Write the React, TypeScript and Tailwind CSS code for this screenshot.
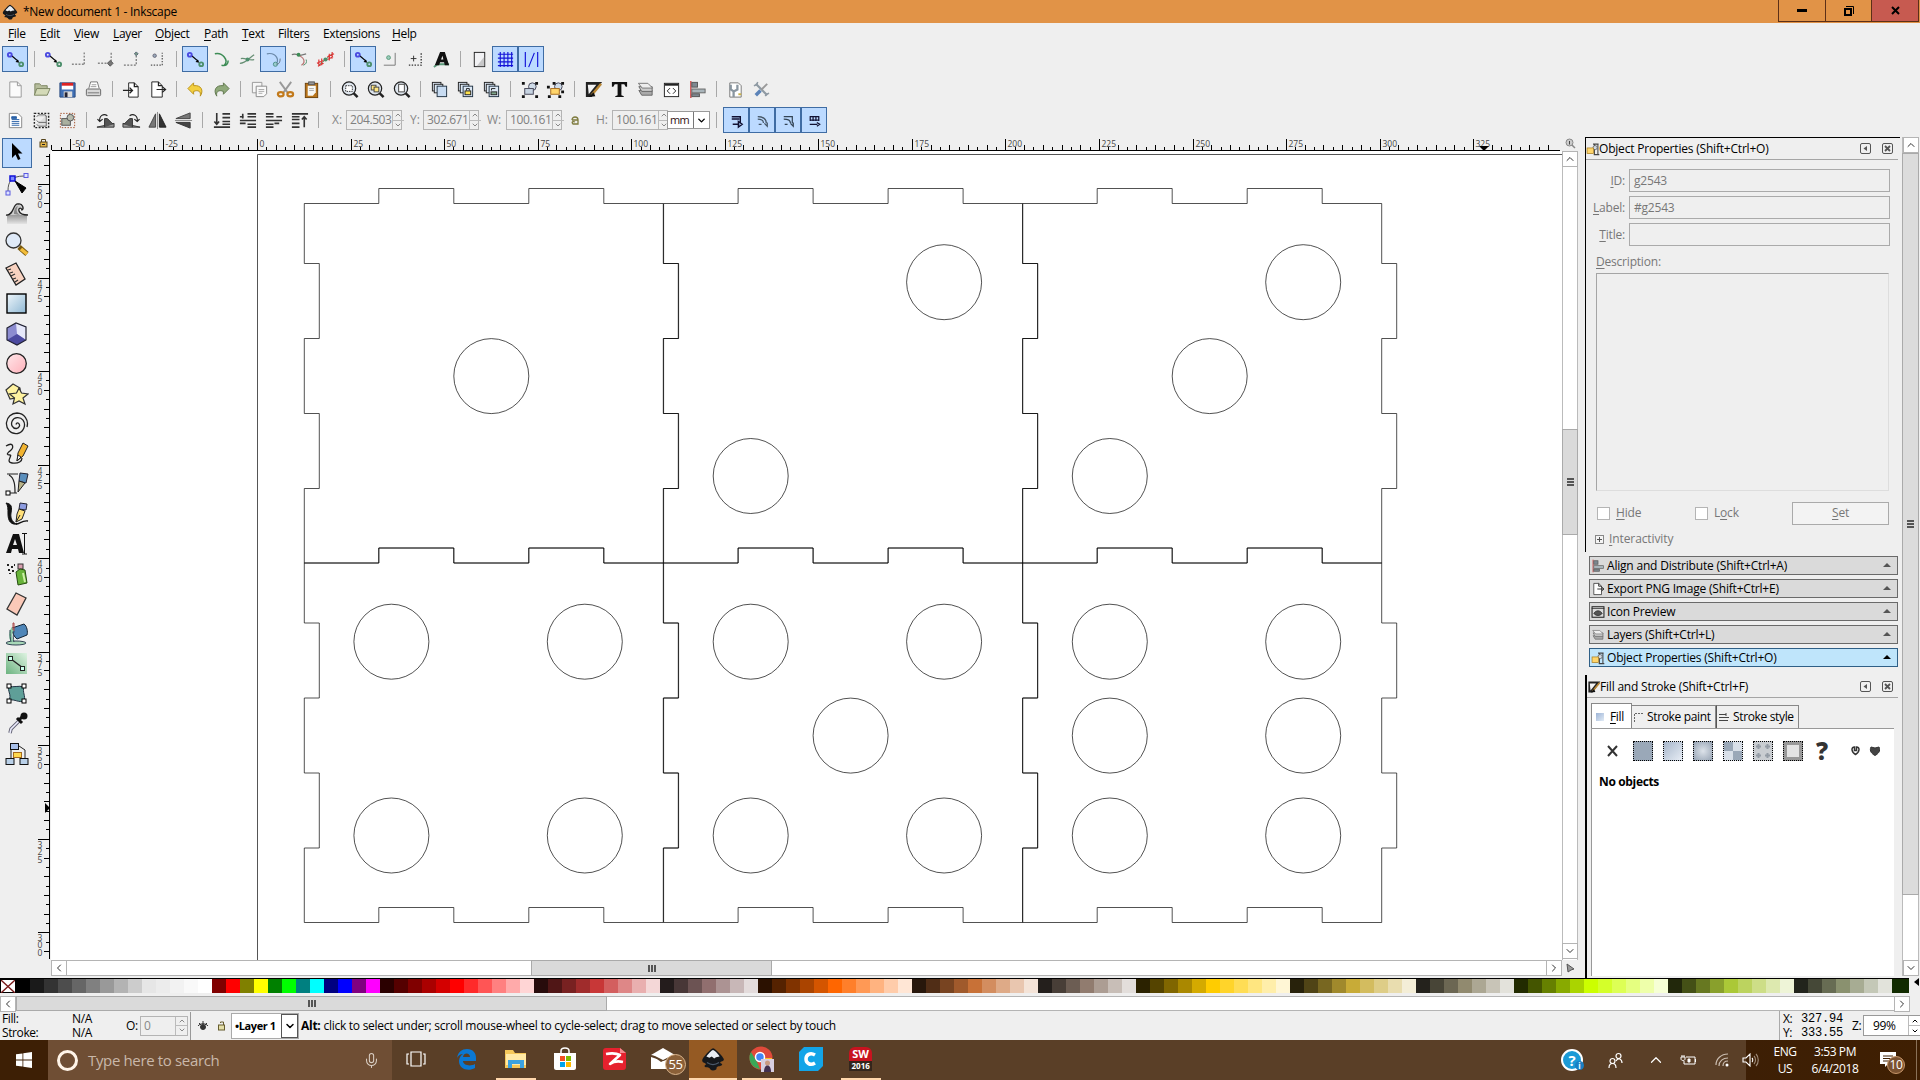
import { ReactNode } from "react";
import clsx from "clsx";
import { ChevronDown, ChevronLeft, ChevronRight, ChevronUp, Mic } from "lucide-react";

const UI = "font-['Open_Sans','Noto_Sans',sans-serif]";

function Svg({ children, size = 20 }: { children: ReactNode; size?: number }) {
  return (
    <svg width={size} height={size} viewBox="0 0 20 20" fill="none" stroke="#222" className="shrink-0">
      {children}
    </svg>
  );
}

const snap = (
  <>
    <path d="M6 6l7 6" stroke="#000" strokeWidth="1.3" />
    <path d="M14 13.500l-4-.8 2.500-2.700z" fill="#000" stroke="none" />
    <circle cx="4" cy="5" r="2" stroke="#4a4ae0" strokeWidth="2" />
    <circle cx="16" cy="15" r="2" stroke="#4d8f6c" strokeWidth="2" />
  </>
);
const zoomBase = (
  <>
    <circle cx="9.500" cy="9" r="7" fill="#dfe6ee" strokeWidth="1.300" />
    <path d="M14.500 14l4 4" strokeWidth="2.600" />
  </>
);
const dupBase = (
  <>
    <rect x="2.500" y="2.500" width="9" height="9" fill="#dce8f5" />
    <rect x="4.500" y="4.500" width="9" height="9" fill="#dce8f5" />
  </>
);
const align = (
  <>
    <path d="M3 1v18" stroke="#c33" strokeWidth="1.300" />
    <rect x="4" y="2.500" width="6" height="5" fill="#7d8890" stroke="#555" />
    <rect x="4" y="9.500" width="14" height="4" fill="#a9b5bb" stroke="#666" />
    <rect x="4" y="14.500" width="8" height="3" fill="#7d8890" stroke="#555" />
  </>
);
const layers = (
  <>
    <path d="M3 11l3 5h11v-5z" fill="#aaa" stroke="#666" />
    <path d="M3 7l3 5h11V7z" fill="#ccc" stroke="#666" />
    <path d="M2.500 3.500h10l5 5h-11z" fill="#eee" stroke="#777" />
  </>
);
const fillStroke = (
  <>
    <path d="M2 2h17L8 18H2z" fill="#222" stroke="none" />
    <path d="M4 5h9L5 15z" fill="#f4f4f4" stroke="none" />
    <path d="M18 4L8 16" stroke="#b98734" strokeWidth="2.500" />
    <path d="M10 13l-5 5 7-1z" fill="#111" stroke="none" />
  </>
);
const objProps = (
  <>
    <path d="M10 3h8M11 18h8M12 3v15M17 3v15" stroke="#444" strokeWidth="1.500" />
    <circle cx="13" cy="8" r="3" fill="#cfd8e2" stroke="#555" />
    <rect x="1.500" y="8.500" width="9" height="8" fill="#ffd56b" stroke="#a67a1c" />
  </>
);
const exportIcon = (
  <>
    <path d="M4 2h7l4 4v12H4z" fill="#fff" />
    <path d="M11 2v4h4M9 10h9M15 7l3.500 3-3.500 3" strokeWidth="1.300" />
  </>
);

const I: Record<string, ReactNode> = {
  snap,
  bbox: <path d="M2 15h13M15 15V2" stroke="#888" strokeWidth="1.500" strokeDasharray="2 1.500" />,
  bboxEdge: (
    <>
      <path d="M2 14h13M16 12V2" stroke="#888" strokeWidth="1.500" strokeDasharray="2 1.500" />
      <path d="M15 11l3 3-3 3-3-3z" fill="#777" stroke="#555" />
    </>
  ),
  bboxMid: (
    <>
      <path d="M2 16h13V6" stroke="#777" strokeDasharray="2 1.500" strokeWidth="1.300" />
      <path d="M15 2l2 2-2 2-2-2z" fill="#7a9a86" stroke="#567" />
    </>
  ),
  bboxCtr: (
    <>
      <path d="M3 16h12V3" stroke="#555" strokeDasharray="1.500 1.500" strokeWidth="1.300" />
      <circle cx="7" cy="6" r="1.800" stroke="#667" fill="#9ab" />
    </>
  ),
  curve: <path d="M3 4c8-2 15 7 10 12M17 11c0 4-2 6-7 5" stroke="#3c8c55" strokeWidth="1.600" />,
  cross: (
    <>
      <path d="M2 14c6 0 9-5 15-9M3 9c5-1 10 3 14 1" stroke="#678f74" strokeWidth="1.300" />
      <circle cx="10" cy="10" r="2" fill="#4d8f6c" stroke="none" />
    </>
  ),
  cusp: (
    <>
      <path d="M3 4c10-2 15 8 8 12" stroke="#6a88a8" strokeWidth="1.300" />
      <circle cx="12" cy="15" r="2.200" stroke="#4d8f8c" fill="#9cc" />
      <path d="M17 9c0 4-1 6-4 6" stroke="#678" />
    </>
  ),
  smooth: (
    <>
      <path d="M2 5c3-2 6 0 8 1l7-2" stroke="#777" strokeWidth="1.300" />
      <path d="M10 6c6 3 6 8 2 10" stroke="#b77" strokeWidth="1.300" />
      <circle cx="9" cy="5" r="2" fill="#3c8c55" stroke="none" />
      <path d="M17 10c1 3 0 5-3 6" stroke="#4d8f6c" />
    </>
  ),
  line: (
    <>
      <path d="M3 16L17 4" stroke="#3c8c55" />
      <path d="M3 10v7M6 9v7M14 4v7M17 2v7M1 14l7-3M2 17l6-3M12 7l7-3M12 10l6-3" stroke="#d33" strokeWidth="1.200" />
      <circle cx="10" cy="10" r="2.200" fill="#4d8f6c" stroke="none" />
    </>
  ),
  objCtr: (
    <>
      <path d="M4 16h12V3" stroke="#777" />
      <circle cx="9" cy="8" r="2" stroke="#5a9a7a" fill="#9cb" />
    </>
  ),
  rotCtr: (
    <>
      <path d="M3 16h13V3" stroke="#333" strokeDasharray="1.500 1.500" strokeWidth="1.400" />
      <path d="M5 9h6M8 6v6" stroke="#333" />
    </>
  ),
  text: (
    <>
      <path d="M2 18l4-3h12" stroke="#5a9a7a" strokeWidth="2" />
      <path d="M3 16L8.500 2h5L18 16h-4.500l-.8-3H8.500l-1 3zM9.500 10h2.500l-1-4z" fill="#111" fillRule="evenodd" stroke="none" />
    </>
  ),
  page: (
    <>
      <rect x="4.500" y="2.500" width="11" height="15" fill="#f2f2f4" stroke="#222" />
      <path d="M15 17V7l-8 10z" fill="#aaa" stroke="none" opacity=".6" />
    </>
  ),
  grid: <path d="M4.500 2v16M8.500 2v16M12.500 2v16M16.500 2v16M2 4.500h16M2 8.500h16M2 12.500h16M2 16.500h16" stroke="#1212d8" strokeWidth="1.200" />,
  guide: <path d="M3.500 2v16M16.500 2v16M13 3L7 18" stroke="#1212d8" strokeWidth="1.200" />,
  newDoc: (
    <>
      <path d="M4 2h8l4 4v12H4z" fill="#fbfbfb" stroke="#999" />
      <path d="M12 2v4h4" stroke="#999" />
    </>
  ),
  open: (
    <>
      <path d="M3 16V4h5l2 2h6v3" fill="#b6bd9c" stroke="#7a8460" />
      <path d="M2.500 16L5 9h14l-3 7z" fill="#d4dab8" stroke="#7a8460" />
    </>
  ),
  save: (
    <>
      <path d="M2 3h16v15H2z" fill="#3f6fb5" stroke="#284a80" />
      <path d="M4 3h12v4H4z" fill="#d22" stroke="none" />
      <path d="M4 6h12v4H4z" fill="#fff" stroke="none" />
      <rect x="6" y="12" width="9" height="6" fill="#ddd" stroke="none" />
      <rect x="7" y="13" width="3" height="5" fill="#223" stroke="none" />
    </>
  ),
  print: (
    <>
      <path d="M5 9l2-7h7l2 7" fill="#fff" stroke="#777" />
      <path d="M8 5h5M7 7h6" stroke="#999" />
      <rect x="2.500" y="9.500" width="15" height="7" rx="1" fill="#d8d8d8" stroke="#666" />
      <path d="M4 13.500h12" stroke="#777" />
    </>
  ),
  imp: (
    <>
      <path d="M7 3h6l4 4v11H7z" fill="#fff" />
      <path d="M13 3v4h4M1 11h10M8 8l3 3-3 3" strokeWidth="1.400" />
    </>
  ),
  exp: exportIcon,
  undo: <path d="M8 3L2 9l6 6v-3c5-2 8 0 7 5 4-6 1-12-7-11z" fill="#f3cf3f" stroke="#b8901c" />,
  redo: <path d="M12 3l6 6-6 6v-3c-5-2-8 0-7 5-4-6-1-12 7-11z" fill="#8fa97a" stroke="#61784f" />,
  copy: (
    <>
      <path d="M2.500 2.500h10v11h-10z" fill="#f6f6f6" stroke="#999" />
      <path d="M6.500 6.500h11v8l-3 3h-8z" fill="#f9f9f9" stroke="#888" />
      <path d="M9 10h6M9 12h6M9 14h4" stroke="#aaa" />
    </>
  ),
  cut: (
    <>
      <path d="M4 2l8 11M16 2L8 13" stroke="#999" strokeWidth="2" />
      <ellipse cx="5" cy="15" rx="3" ry="2.300" stroke="#c27a1c" strokeWidth="2.300" />
      <ellipse cx="15" cy="15" rx="3" ry="2.300" stroke="#c27a1c" strokeWidth="2.300" />
    </>
  ),
  paste: (
    <>
      <rect x="3.500" y="3.500" width="13" height="15" fill="#b8741a" stroke="#6d430c" />
      <path d="M6 6h8.500v7l-3 3.500H6z" fill="#f8f8f4" stroke="none" />
      <rect x="7" y="2" width="6" height="3" fill="#999" stroke="#555" />
      <path d="M7.500 9h5M7.500 11h5" stroke="#aaa" />
    </>
  ),
  zoomSel: (
    <>
      {zoomBase}
      <rect x="6" y="6" width="7" height="6" stroke="#333" strokeDasharray="1.500 1" fill="#fff" />
    </>
  ),
  zoomDraw: (
    <>
      {zoomBase}
      <rect x="5.500" y="5.500" width="5" height="5" fill="#ffe680" stroke="#444" />
      <rect x="8.500" y="7.500" width="5" height="5" fill="#ffe680" stroke="#444" />
    </>
  ),
  zoomPage: (
    <>
      {zoomBase}
      <rect x="7" y="4.500" width="6" height="8" fill="#fff" stroke="#444" />
    </>
  ),
  dup: (
    <>
      {dupBase}
      <rect x="7.500" y="6.500" width="10" height="11" fill="#c8dcf2" stroke="#234" />
    </>
  ),
  clone: (
    <>
      {dupBase}
      <rect x="7.500" y="6.500" width="10" height="11" fill="#dce8f5" stroke="#234" />
      <rect x="9.500" y="11.500" width="6" height="4" fill="#ffe34d" stroke="#222" />
      <path d="M11 11V9h3v2" />
    </>
  ),
  unlink: (
    <>
      {dupBase}
      <rect x="7.500" y="6.500" width="10" height="11" fill="#dce8f5" stroke="#234" />
      <rect x="9.500" y="12.500" width="6" height="3" fill="#7fa68a" stroke="#222" />
      <path d="M10 11V9h4" />
    </>
  ),
  group: (
    <>
      <circle cx="13" cy="7" r="4" fill="#cfdbe8" stroke="#445" />
      <rect x="5" y="9" width="9" height="6" fill="#c7d4e2" stroke="#445" />
      <path d="M2 2h3v3H2zM16 2h3v3h-3zM2 16h3v3H2zM16 16h3v3h-3z" fill="#111" stroke="none" />
    </>
  ),
  ungroup: (
    <>
      <circle cx="13" cy="7" r="4" fill="#cfdbe8" stroke="#445" />
      <rect x="5" y="9" width="9" height="6" fill="#ffd56b" stroke="#a66a1c" />
      <path d="M1 6h3v3H1zM7 2h3v3H7zM16 2h3v3h-3zM2 16h3v3H2zM16 11h3v3h-3zM13 16h3v3h-3z" fill="#111" stroke="none" />
    </>
  ),
  fillStroke,
  bigT: <path d="M2 2h16v5h-1.500L15 4.500h-3V16l2.500 1v1h-9v-1L8 16V4.500H5L3.500 7H2z" fill="#111" stroke="none" />,
  layers,
  xml: (
    <>
      <rect x="2.500" y="3.500" width="15" height="14" fill="#fff" stroke="#222" />
      <path d="M3 5h14" strokeWidth="2" />
      <path d="M8.500 8.500L5.500 11.500l3 3M11.500 8.500l3 3-3 3" />
    </>
  ),
  align,
  prefs: (
    <>
      <path d="M4 3h9l3 3v12H4z" fill="#fff" stroke="#777" />
      <path d="M5 5v5l3 2v6M12 5v5l-4 2" stroke="#8a96a0" strokeWidth="2.400" />
      <path d="M13 15h3" stroke="#c9b14a" strokeWidth="2" />
    </>
  ),
  tools: (
    <>
      <path d="M4 4l12 12" stroke="#8f9aa3" strokeWidth="2.400" />
      <path d="M16 4L10 10" stroke="#999" strokeWidth="2" />
      <path d="M9 11l-5 5" stroke="#5b83b8" strokeWidth="3.600" />
      <path d="M2 6l3-1 1-3M14 17l1-2 3-1" stroke="#8f9aa3" strokeWidth="1.600" />
    </>
  ),
  selAll: (
    <>
      <path d="M3.500 2.500h9l4 4v11h-13z" fill="#fff" stroke="#888" />
      <path d="M6 6h5v2H6zM6 9h8M6 11h8M6 13h8M6 15h8" fill="#2a62a8" stroke="#2a62a8" />
    </>
  ),
  selLayers: (
    <>
      <path d="M5 6l2-2h7l1 2M5 10l2 2h8M5 14l2 2h8V5" stroke="#666" fill="#ddd" />
      <rect x="2.500" y="2.500" width="15" height="15" strokeDasharray="2 1.500" strokeWidth="1.500" />
    </>
  ),
  desel: (
    <>
      <rect x="4" y="8" width="9" height="7" fill="#aab09f" stroke="#555" />
      <circle cx="13" cy="7" r="3.500" fill="#b8bcae" stroke="#555" />
      <rect x="2.500" y="2.500" width="15" height="15" stroke="#a3502a" strokeDasharray="1.500 1.500" />
    </>
  ),
  rotL: (
    <>
      <path d="M1 17h18V13z" fill="#999" stroke="#333" />
      <path d="M9 17V8h3l6 6" fill="#555" stroke="#333" />
      <path d="M4 11c-1-6 4-9 8-6M1.500 8.500L4 11l3-2.500" strokeWidth="1.200" />
    </>
  ),
  rotR: (
    <>
      <path d="M19 17H1v-4z" fill="#999" stroke="#333" />
      <path d="M2 14l6-6h3v9" fill="#555" stroke="#333" />
      <path d="M16 11c1-6-4-9-8-6M18.500 8.500L16 11l-3-2.500" strokeWidth="1.200" />
    </>
  ),
  flipH: (
    <>
      <path d="M8 3v14H1z" fill="#777" stroke="#444" />
      <path d="M12 3v14h7z" fill="#333" stroke="#222" />
      <path d="M10 1v18" stroke="#888" />
    </>
  ),
  flipV: (
    <>
      <path d="M17 8V2L2 8z" fill="#777" stroke="#444" />
      <path d="M17 12v6L2 12z" fill="#444" stroke="#333" />
      <path d="M1 10h18" stroke="#888" />
    </>
  ),
  lower2: <path d="M5 2v12M2.500 11L5 14l2.500-3M11 3h8M11 7h8M11 11h8M2 17h17M11 14h8" stroke="#333" strokeWidth="1.700" />,
  lower1: <path d="M10 3h9M10 6h9M2 10h17M10 14h9M10 17h9M2 6h4M5 3v5M8 13H2" stroke="#333" strokeWidth="1.700" />,
  raise1: <path d="M2 3h8M2 6h8M2 10h17M2 14h8M2 17h8M13 6h6M11 13h5" stroke="#333" strokeWidth="1.700" />,
  raise2: <path d="M2 3h17M2 6h8M2 9h8M2 13h8M2 17h8M15 17V7M12.500 9L15 6l2.500 3" stroke="#333" strokeWidth="1.700" />,
  aff1: <path d="M5 6h9v6M5 8.500h8M6 14h7M12 11l4 3-4 3z" stroke="#113" fill="none" strokeWidth="1.500" />,
  aff2: <path d="M5 6c6 0 9 3 9 7M5 8.500c4 0 6 2 6 4M6 14h3M12 13l3 3v-4" stroke="#456" strokeWidth="1.300" />,
  aff3: <path d="M5 6h9v7M5 8.500c4 0 7 1 7 4M6 14h3M12 13l3 3v-4" stroke="#345" strokeWidth="1.300" />,
  aff4: <path d="M5 6h10M5 9.500h10M5.500 5.500v5M8.500 5.500v5M11.500 5.500v5M14.500 5.500v5M5 14h8M12.500 12l3 2-3 2" stroke="#113" strokeWidth="1.300" />,
};

const ROW1 = "*snap | snap bbox bboxEdge bboxMid bboxCtr | *snap curve cross *cusp smooth line | *snap objCtr rotCtr text | page *grid *guide".split(" ");
const ROW2 =
  "newDoc open save print | imp exp | undo redo | copy cut paste | zoomSel zoomDraw zoomPage | dup clone unlink | group ungroup | fillStroke bigT layers xml align | prefs tools".split(" ");
const ROW3 = "selAll selLayers desel | rotL rotR flipH flipV | lower2 lower1 raise1 raise2 |".split(" ");
const AFFECT = "*aff1 *aff2 *aff3 *aff4".split(" ");

function Tools({ items }: { items: string[] }) {
  return (
    <div className="flex items-center">
      {items.map((item, i) =>
        item === "|" ? (
          <div key={i} className="w-3 h-4 flex justify-center">
            <div className="w-px bg-[#a8a8a8]" />
          </div>
        ) : (
          <div
            key={i}
            className={clsx("w-[26px] h-[26px] flex items-center justify-center", item[0] === "*" && "bg-[#bcdaff] border border-[#3f6ca3]")}
          >
            <Svg size={19}>{I[item.replace("*", "")]}</Svg>
          </div>
        )
      )}
    </div>
  );
}

function InkscapeLogo({ size }: { size: number }) {
  return (
    <svg width={size} height={size} viewBox="0 0 20 20" className="shrink-0">
      <path d="M10 1c1.500 0 8.500 7 9 9s-3 2-3 3 3 1 1 2.500c-1 .7-4 .5-4 2s-1 2-3 2-2-1-3-2-4 0-4-1.500 2-1 1-2-3-1-3-3S8.500 1 10 1z" fill="#15181c" />
      <path d="M10 2.500c1 0 5 4 5.500 5.500l-3 .5-1.500 1-2-1.500-2 1-2.500-1C5 7 9 2.500 10 2.500z" fill="#e8edf3" />
      <path d="M5 13c3 2 7 2 10 0" stroke="#4c5a6b" fill="none" />
    </svg>
  );
}

const menus = [
  { w: "w-[18px]", pre: "", key: "F", post: "ile" },
  { w: "w-[20px]", pre: "", key: "E", post: "dit" },
  { w: "w-[25px]", pre: "", key: "V", post: "iew" },
  { w: "w-[28px]", pre: "", key: "L", post: "ayer" },
  { w: "w-[35px]", pre: "", key: "O", post: "bject" },
  { w: "w-[24px]", pre: "", key: "P", post: "ath" },
  { w: "w-[22px]", pre: "", key: "T", post: "ext" },
  { w: "w-[31px]", pre: "Filter", key: "s", post: "" },
  { w: "w-[55px]", pre: "Exte", key: "n", post: "sions" },
  { w: "w-[25px]", pre: "", key: "H", post: "elp" },
];

function Header() {
  return (
    <>
      <div className="h-[23px] shrink-0 bg-[#e19347] flex items-center pl-[2px]">
        <InkscapeLogo size={16} />
        <span className="ml-[5px] text-[12px] tracking-[-0.28px]">*New document 1 - Inkscape</span>
        <div className="ml-auto mr-[1px] flex self-start h-[22px] border-b border-l border-[#5c2f17]">
          <div className="w-[47px] border-r border-[#5c2f17] flex items-center justify-center">
            <div className="w-[10px] h-[3px] bg-black" />
          </div>
          <div className="w-[46px] border-r border-[#5c2f17] flex items-center justify-center">
            <svg width="12" height="12" viewBox="0 0 12 12" fill="none" stroke="#000">
              <rect x="2" y="4" width="6" height="6" strokeWidth="2" />
              <path d="M3 1.500h7.500V9" />
            </svg>
          </div>
          <div className="w-[47px] border-r border-[#5c2f17] bg-[#c75a50] flex items-center justify-center">
            <svg width="9" height="9" viewBox="0 0 9 9" stroke="#000" strokeWidth="2">
              <path d="M1 1l7 7M8 1L1 8" />
            </svg>
          </div>
        </div>
      </div>
      <div className="h-[22px] shrink-0 flex items-center gap-[14px] pl-2 text-[12px] tracking-[-0.35px]">
        {menus.map((m) => (
          <span key={m.key + m.post} className={clsx("whitespace-nowrap", m.w)}>
            {m.pre}
            <u className="underline-offset-2">{m.key}</u>
            {m.post}
          </span>
        ))}
      </div>
    </>
  );
}

function Spin({ dark }: { dark?: boolean }) {
  return (
    <div className={clsx("w-[12px] shrink-0 flex flex-col border-l border-[#bbb]", dark ? "text-black" : "text-[#888]")}>
      <div className="flex-1 flex items-center justify-center border-b border-[#bbb]">
        <ChevronUp size={8} strokeWidth={3} />
      </div>
      <div className="flex-1 flex items-center justify-center">
        <ChevronDown size={8} strokeWidth={3} />
      </div>
    </div>
  );
}

function NumField({ label, value, lw }: { label: string; value: string; lw: string }) {
  return (
    <>
      <span className={clsx("text-[12px] text-[#888]", lw)}>{label}</span>
      <div className="w-[56px] h-5 border border-[#b4b4b4] flex text-[12px] text-[#808080]">
        <span className="flex-1 pl-[3px] leading-[18px] tracking-[-0.4px]">{value}</span>
        <Spin />
      </div>
    </>
  );
}

function Toolbars() {
  return (
    <>
      <div className="h-7 shrink-0 flex items-center pl-[2px]">
        <Tools items={ROW1} />
      </div>
      <div className="h-8 shrink-0 flex items-center pl-[2px]">
        <Tools items={ROW2} />
      </div>
      <div className="h-[30px] shrink-0 flex items-center pl-[2px]">
        <Tools items={ROW3} />
        <NumField label="X:" value="204.503" lw="pl-2 w-[22px]" />
        <NumField label="Y:" value="302.671" lw="pl-2 w-[21px]" />
        <NumField label="W:" value="100.161" lw="pl-2 w-[27px]" />
        <div className="w-[26px] flex justify-center">
          <svg width="10" height="11" viewBox="0 0 10 11" fill="none" stroke="#7d7a3c" strokeWidth="1.300">
            <path d="M2 5c0-4 6-4 6 0M2 5h6v4H3c-2-2 0-3 2-2" />
          </svg>
        </div>
        <NumField label="H:" value="100.161" lw="pl-2 w-[24px]" />
        <div className="-ml-px w-[43px] h-[18px] bg-white border border-[#999] flex text-[11px]">
          <span className="w-[25px] shrink-0 pl-[2px] leading-[15px] tracking-[-0.6px] text-[#301010]">mm</span>
          <div className="w-[16px] shrink-0 border-l border-[#777] flex items-center justify-center">
            <ChevronDown size={11} strokeWidth={3} />
          </div>
        </div>
        <div className="w-[13px] h-4 flex justify-center">
          <div className="w-px bg-[#a8a8a8]" />
        </div>
        <Tools items={AFFECT} />
      </div>
    </>
  );
}

const handle = (x: number, y: number) => <rect x={x} y={y} width="4" height="4" fill="#fff" stroke="#000" />;

const toolbox: ReactNode[] = [
  <path d="M7 1v15l3.500-3.500L13 18l2.500-1-2.500-5.500h4.500z" fill="#000" stroke="none" />,
  <>
    <path d="M3 19C3 10 6 4 19 4" stroke="#555" />
    <rect x="5" y="4" width="5" height="5" fill="#7d8cff" stroke="#1212d8" strokeWidth="1.500" />
    <rect x="19" y="1.500" width="4" height="4" fill="#dfe3ff" stroke="#5a5ae0" />
    <rect x="1" y="19" width="4" height="4" fill="#dfe3ff" stroke="#5a5ae0" />
    <path d="M10 9l11 7-4 5z" fill="#000" stroke="#000" />
  </>,
  <>
    <path d="M2 13h20v9H2z" fill="url(#water)" stroke="none" />
    <path d="M1 13c8 1 7-12 12-11 5-1 6 5 4 6-1-3-4-2-3 1 1 3 5 4 9 4" fill="#ccc" stroke="#222" strokeWidth="1.300" />
    <path d="M9 12c0-4 1-7 4-8-2 4-2 6 2 9z" fill="#888" stroke="none" />
  </>,
  <>
    <path d="M14 15l8 7" stroke="#7a5a10" strokeWidth="5" />
    <path d="M16 17l6 5" stroke="#f3bd3a" strokeWidth="3.500" />
    <circle cx="8.500" cy="8.500" r="7.500" fill="#dfeaf8" stroke="#333" strokeWidth="1.300" />
  </>,
  <>
    <path d="M1 6l10-5 9 16-9 6z" fill="#f8d2c0" stroke="#222" strokeWidth="1.300" />
    <path d="M3 8l3-1M5 11l3-1M6 14l4-2M8 17l3-1M10 20l3-2" stroke="#333" strokeWidth="1.300" />
  </>,
  <rect x="2" y="2" width="19" height="19" fill="url(#sky)" stroke="#000" strokeWidth="1.400" />,
  <>
    <path d="M2 6l9-5 10 4v13l-9 5-10-5z" fill="#8c8cd0" stroke="none" />
    <path d="M11 1l10 4v13l-9-6z" fill="#e6e8fa" stroke="none" />
    <path d="M2 18l10-6 9 6-9 5z" fill="#4c4aa0" stroke="none" />
    <path d="M2 6l9-5 10 4v13l-9 5-10-5z" stroke="#223" strokeWidth="1.200" />
  </>,
  <circle cx="11.500" cy="11.500" r="9.800" fill="url(#rose)" stroke="#222" strokeWidth="1.300" />,
  <>
    <path d="M1 8l7-6 7 4v9l-10 2z" fill="#fff3a0" stroke="#333" strokeWidth="1.200" />
    <path d="M14 6l2.500 5 6.500 1-5 4 2 6-6-3-6 3 1.500-6-5-4 7-1z" fill="#fff3a0" stroke="#333" strokeWidth="1.200" />
  </>,
  <path
    d="M11.500 12.500c-.8-.8.500-2.300 2-1.300 2 1.500 1 5-2 5.300-4 .3-6-4-4.300-7.500 2-4 8-4.500 10.800-.8 3.500 5 .5 12-5.500 13.300-7 1-11.700-5-11-11C2 5 6.500 1 12 1c7 .3 12 6.500 10 14"
    stroke="#222"
    strokeWidth="1.300"
  />,
  <>
    <path d="M1 4c8-5 8 2 4 5s-3 4 0 4-5 7 2 8 10-2 10-5" stroke="#222" strokeWidth="1.300" />
    <path d="M12 19l1-8 5-10 5 3-5 10z" fill="#f2b431" stroke="#222" />
    <path d="M12 19l1-6 3 2z" fill="#fff" stroke="#222" />
  </>,
  <>
    <path d="M2 2h11M4 3c6 3 6 12 6 18M3 21h9" stroke="#222" strokeWidth="1.200" />
    {handle(1, 19)}
    <path d="M15 1l8 1-2 9-7-2z" fill="#5b8fbd" stroke="#223" />
    <path d="M14 9l6 2-7 9z" fill="#b9b48a" stroke="#222" />
  </>,
  <>
    <path d="M1 1c6 1 6 4 5 10s2 10 6 11c-6 1-9-3-9-10 0-5 0-9-2-11z" fill="#111" stroke="#111" />
    <path d="M11 22c4 0 6-4 12-3" stroke="#111" strokeWidth="1.300" />
    <path d="M15 1l7 1-1 6-7-1z" fill="#8d9ce0" stroke="#223" />
    <path d="M14 7l6 2-3 8-6 3 1-8z" fill="#ffe07a" stroke="#222" />
    <path d="M11 20l4-7" />
  </>,
  <>
    <path d="M1 21L8 2h6l5 19h-5l-1-4H7l-1 4zM8 13h4l-2-6z" fill="#111" fillRule="evenodd" stroke="none" />
    <path d="M17 1.500h5M19.500 1v21M17 22h5" stroke="#111" />
  </>,
  <>
    <path d="M2 2h2v2H2zM6 4h2v2H6zM3 7h2v2H3zM7 8h2v2H7zM4 11h2v1H4zM9 2h1v2H9z" fill="#222" stroke="none" />
    <rect x="13" y="2" width="5" height="5" fill="#d9a0b0" stroke="#333" />
    <path d="M11 10l4-3 5 1 2 13-9 2z" fill="#68b43a" stroke="#264d10" />
    <path d="M18 11l2 9" stroke="#cdf0a8" strokeWidth="2" />
  </>,
  <path d="M11 1l10 5-9 17-10-6z" fill="#fbc9b8" stroke="#333" strokeWidth="1.300" />,
  <>
    <ellipse cx="11" cy="21" rx="10" ry="2" fill="#a8d8b8" stroke="#345" />
    <path d="M7 6l12-4c3 2 4 8 3 11l-10 4c-3-2-5-7-5-11z" fill="#4f86b8" stroke="#123" />
    <path d="M8 6c-3 4-3 9-1 14" stroke="#8ccba6" strokeWidth="3" />
    <path d="M5 8c0 5 0 8 1 12M9 9c-1 4-1 8 0 11" stroke="#345" />
    <path d="M8 8V1h1v8" stroke="#a44" />
  </>,
  <>
    <rect x="1" y="1" width="21" height="21" fill="url(#leaf)" stroke="none" />
    <path d="M6 7l12 9" stroke="#222" strokeWidth="1.300" />
    <rect x="3.500" y="4.500" width="4" height="4" fill="#cfe" stroke="#222" />
    <rect x="15.500" y="14.500" width="4" height="4" fill="#cfe" stroke="#222" />
  </>,
  <>
    <path d="M4 4c5 2 9-1 15 1-2 5 2 9 0 14-5 2-9-2-15-1 3-5-2-9 0-14z" fill="#5f9f98" stroke="#234" />
    {handle(2, 2)}
    {handle(17, 2)}
    {handle(2, 17)}
    {handle(17, 17)}
  </>,
  <>
    <path d="M15 8L6 17l-1 4" stroke="#667" strokeWidth="3.500" />
    <path d="M15 8L6 17l-1 4" stroke="#eef" strokeWidth="1.500" />
    <path d="M12 6l5 5M14 8l5-5" stroke="#111" strokeWidth="3" />
    <circle cx="19" cy="4" r="3.500" fill="#111" stroke="none" />
  </>,
  <>
    <path d="M6 17V6M20 17V8l-6-4" stroke="#222" />
    <rect x="5.500" y="1.500" width="8" height="6" fill="#a9c0ea" stroke="#111" />
    <rect x="8.500" y="10.500" width="8" height="5" fill="#ffd84d" stroke="#a66a1c" />
    <rect x="1" y="16.500" width="8" height="6" fill="#b9d0e8" stroke="#111" />
    <rect x="15" y="16.500" width="8" height="6" fill="#b9d0e8" stroke="#111" />
  </>,
];

function Toolbox() {
  return (
    <div className="w-[36px] shrink-0 pt-[3px] pl-[2px]">
      <svg width="0" height="0" className="absolute">
        <defs>
          <linearGradient id="sky" x1="0" y1="0" x2="1" y2="1">
            <stop offset="0" stopColor="#eef6fb" />
            <stop offset="1" stopColor="#8fb8d4" />
          </linearGradient>
          <linearGradient id="rose" x1="0" y1="0" x2="1" y2="1">
            <stop offset="0" stopColor="#ffe8ea" />
            <stop offset="1" stopColor="#ffb0ba" />
          </linearGradient>
          <linearGradient id="leaf" x1="1" y1="0" x2="0" y2="1">
            <stop offset="0" stopColor="#dff3e2" />
            <stop offset="1" stopColor="#6cb380" />
          </linearGradient>
          <linearGradient id="water" x1="0" y1="0" x2="0" y2="1">
            <stop offset="0" stopColor="#999" />
            <stop offset="1" stopColor="#e4e4e4" />
          </linearGradient>
        </defs>
      </svg>
      {toolbox.map((icon, i) => (
        <div key={i} className={clsx("w-[30px] h-[30px] pt-px flex items-center justify-center", i === 0 && "bg-[#bcdaff] border border-[#3f6ca3]")}>
          <svg width="24" height="24" viewBox="0 0 24 24" fill="none" stroke="#222">
            {icon}
          </svg>
        </div>
      ))}
    </div>
  );
}

// one ruler step is 2.5mm, every tenth one carries a label
const STEP = 9.355;

function TopRuler() {
  const ticks = [];
  for (let i = -22; i < 139; i++) {
    const x = Math.round(257 + i * STEP) + 0.5;
    const major = i % 10 === 0;
    ticks.push(<path key={i} d={`M${x} ${major ? 139 : i % 2 ? 147 : 145}V150`} stroke="#000" />);
    if (major)
      ticks.push(
        <text key={"t" + i} x={x + 2} y="147" fontSize="8.5" fill="#444">
          {i * 2.5}
        </text>
      );
  }
  return (
    <svg width="1509" height="16" viewBox="51 135 1509 16">
      <path d="M52 150.500H1560" stroke="#000" />
      {ticks}
      <path d="M1479 146h10l-5 5z" fill="#000" />
    </svg>
  );
}

function LeftRuler() {
  const ticks = [];
  for (let i = -4; i < 83; i++) {
    const y = Math.round(184 + i * STEP) + 0.5;
    const major = i % 10 === 0;
    if (y < 154 || y > 958) continue;
    ticks.push(<path key={i} d={`M${major ? 38 : i % 2 ? 46 : 44} ${y}H49`} stroke="#000" />);
    if (major)
      String(500 - i * 2.5)
        .split("")
        .forEach((d, n) =>
          ticks.push(
            <text key={i + "d" + n} x="37.500" y={y + 8 + n * 7.7} fontSize="8.5" fill="#444">
              {d}
            </text>
          )
        );
  }
  return (
    <svg width="15" height="809" viewBox="36 151 15 809" className="shrink-0">
      <path d="M49.500 154V959" stroke="#000" />
      {ticks}
      <path d="M45 803v10l5-5z" fill="#000" />
    </svg>
  );
}

const FACE =
  "M0 0H74.500V-15H149.500V0H224.500V-15H299.500V0H359V60H374V135H359V210H374V285H359V359.500H299.500V344.500H224.500V359.500H149.500V344.500H74.500V359.500H0V285H15V210H0V135H15V60H0Z";
const L = 87.1;
const M = 187;
const R = 280.5;
const T = 78.7;
const C = 172.6;
const B = 272.5;

const faces = [
  { x: 304.3, y: 203.5, pips: [[M, C]] },
  { x: 663.6, y: 203.5, pips: [[R, T], [L, B]] },
  { x: 1022.7, y: 203.5, pips: [[R, T], [M, C], [L, B]] },
  { x: 304.3, y: 563, pips: [[L, T], [R, T], [L, B], [R, B]] },
  { x: 663.6, y: 563, pips: [[L, T], [R, T], [M, C], [L, B], [R, B]] },
  { x: 1022.7, y: 563, pips: [[L, T], [R, T], [L, C], [R, C], [L, B], [R, B]] },
];

function Drawing() {
  return (
    <svg width="1511" height="809" viewBox="51 151 1511 809" fill="none" stroke="#000" className="bg-white shrink-0">
      <path d="M1562 154.500H257.500V960" stroke="#555" />
      {faces.map((f, i) => (
        <g key={i} transform={`translate(${f.x} ${f.y})`} strokeOpacity=".68">
          <path d={FACE} />
          {f.pips.map(([cx, cy], n) => (
            <circle key={n} cx={cx} cy={cy} r="37.500" />
          ))}
        </g>
      ))}
    </svg>
  );
}

function ScrollBtn({ children }: { children: ReactNode }) {
  return <div className="w-4 h-4 shrink-0 bg-white border border-[#b4b4b4] flex items-center justify-center text-[#333]">{children}</div>;
}

function Grip({ tall }: { tall?: boolean }) {
  const bar = tall ? "w-[2px] h-[7px] bg-[#555]" : "w-[7px] h-[2px] bg-[#555]";
  return (
    <div className={clsx("flex gap-px", !tall && "flex-col")}>
      <div className={bar} />
      <div className={bar} />
      <div className={bar} />
    </div>
  );
}

function Workspace() {
  return (
    <div className="w-[1549px] shrink-0 flex flex-col">
      <div className="flex h-4">
        <div className="w-[15px] flex justify-center pt-[3px]">
          <svg width="9" height="10" viewBox="0 0 9 10" fill="none" stroke="#55431a">
            <path d="M2.500 4V1.500h4V4" />
            <rect x="1" y="4" width="7" height="5" fill="#e3b54a" />
            <path d="M3 6.500h3" stroke="#222" />
          </svg>
        </div>
        <TopRuler />
        <div className="ml-[5px] pt-[3px]">
          <svg width="11" height="11" viewBox="0 0 11 11" fill="none" stroke="#888">
            <circle cx="4.500" cy="4.500" r="3.500" fill="#ccc" />
            <path d="M7 7l3 3" strokeWidth="1.500" />
            <path d="M4.500 3v3.500" stroke="#444" />
          </svg>
        </div>
      </div>
      <div className="flex h-[809px]">
        <LeftRuler />
        <Drawing />
        <div className="w-4 flex flex-col bg-white border-x border-[#bbb] items-center">
          <ScrollBtn>
            <ChevronUp size={12} />
          </ScrollBtn>
          <div className="mt-[262px] h-[106px] w-4 bg-[#dadada] border border-[#aaa] flex items-center justify-center">
            <Grip />
          </div>
          <div className="mt-auto mb-px">
            <ScrollBtn>
              <ChevronDown size={12} />
            </ScrollBtn>
          </div>
        </div>
      </div>
      <div className="flex h-4 pl-[15px] items-center">
        <div className="w-[1511px] h-4 flex bg-white border-y border-[#b4b4b4] items-center">
          <ScrollBtn>
            <ChevronLeft size={12} />
          </ScrollBtn>
          <div className="ml-[464px] w-[241px] h-4 shrink-0 bg-[#dadada] border border-[#aaa] flex items-center justify-center">
            <Grip tall />
          </div>
          <div className="ml-auto">
            <ScrollBtn>
              <ChevronRight size={12} />
            </ScrollBtn>
          </div>
        </div>
        <svg width="9" height="10" viewBox="0 0 9 10" className="ml-[4px]">
          <path d="M1 1l7 5-3 1-3 2z" fill="#999" stroke="#555" />
        </svg>
      </div>
    </div>
  );
}

function PanelTitle({ icon, children }: { icon: ReactNode; children: ReactNode }) {
  return (
    <div className="h-[22px] shrink-0 flex items-center text-[12px] tracking-[-0.2px] border-b border-[#a5a5a5] mr-[2px]">
      <Svg size={14}>{icon}</Svg>
      <span className="-ml-px">{children}</span>
      <svg width="34" height="11" viewBox="0 0 34 11" fill="none" stroke="#555" className="ml-auto mr-[4px]">
        <rect x=".5" y=".5" width="10" height="10" rx="1.500" />
        <path d="M7 3v5L3.500 5.500z" fill="#555" stroke="none" />
        <rect x="22.500" y=".5" width="10" height="10" rx="1.500" />
        <path d="M25 3l5 5M30 3l-5 5" strokeWidth="1.800" />
      </svg>
    </div>
  );
}

function Field({ k, rest, value }: { k: string; rest: string; value: string }) {
  return (
    <div className="h-[27px] flex items-center text-[12px] text-[#777] tracking-[-0.2px]">
      <span className="w-[39px] text-right">
        <u className="underline-offset-2">{k}</u>
        {rest}
      </span>
      <div className="ml-[4px] w-[261px] h-[23px] border border-[#aaa] pl-[4px] leading-[21px]">{value}</div>
    </div>
  );
}

const docks = [
  { icon: align, label: "Align and Distribute (Shift+Ctrl+A)" },
  { icon: exportIcon, label: "Export PNG Image (Shift+Ctrl+E)" },
  {
    icon: (
      <>
        <rect x="1.500" y="2.500" width="17" height="15" fill="#ddd" strokeWidth="1.500" />
        <path d="M1 5h18M4 12c3-5 9-5 12 0-3 4-9 4-12 0z" fill="#555" />
      </>
    ),
    label: "Icon Preview",
  },
  { icon: layers, label: "Layers (Shift+Ctrl+L)" },
  { icon: objProps, label: "Object Properties (Shift+Ctrl+O)", active: true },
];

function PaintModes() {
  return (
    <div className="flex items-center pt-[12px] pl-[11px]">
      <svg width="20" height="20" viewBox="0 0 20 20" stroke="#333" strokeWidth="2">
        <path d="M5 5l9 10M14 5L5 15" />
      </svg>
      <div className="ml-[10px] flex gap-[10px]">
        <div className="w-5 h-5 border border-dotted border-black bg-[#9aa8b8]" />
        <div className="w-5 h-5 border border-dotted border-black bg-linear-to-br from-[#a9b8cc] to-[#e6ecf4]" />
        <div className="w-5 h-5 border border-dotted border-black bg-radial from-[#dde3ea] to-[#98a5b5]" />
        <div className="w-5 h-5 border border-dotted border-black grid grid-cols-2 bg-[#d8dfe8]">
          <div className="bg-[#9aa8b8]" />
          <div />
          <div />
          <div className="bg-[#9aa8b8]" />
        </div>
        <div className="w-5 h-5 border border-dotted border-black bg-[#c9cdd1] text-[#949ca5]">
          <svg width="18" height="18" viewBox="0 0 18 18" stroke="currentColor" strokeWidth="2">
            <path d="M2 4.500h5M11 4.500h5M2 13.500h5M11 13.500h5M4.500 2v5M13.500 2v5M4.500 11v5M13.500 11v5" />
          </svg>
        </div>
        <div className="w-5 h-5 border border-dotted border-black bg-[#999] p-[3px]">
          <div className="h-full bg-[#e4e4e4]" />
        </div>
      </div>
      <span className="ml-[13px] w-[16px] text-[24px] leading-5 font-extrabold text-[#333]">?</span>
      <svg width="30" height="12" viewBox="0 0 30 12" className="ml-[18px]" fill="none" stroke="#333">
        <path d="M4.500 2C1 2 1 7 5.500 9.500 10 7 10 2 6.500 2v3.500h-2z" strokeWidth="1.500" />
        <path d="M21 2l4 1 4-1c2 4-1 7-4 8.500C22 9 19 6 21 2z" fill="#444" />
      </svg>
    </div>
  );
}

function Panel() {
  return (
    <div className="w-[315px] shrink-0 flex flex-col pt-[2px]">
      <div className="h-[415px] shrink-0 border-t border-l border-black">
        <PanelTitle icon={objProps}>Object Properties (Shift+Ctrl+O)</PanelTitle>
        <div className="pt-[7px]">
          <Field k="I" rest="D:" value="g2543" />
          <Field k="L" rest="abel:" value="#g2543" />
          <Field k="T" rest="itle:" value="" />
        </div>
        <div className="pl-[10px] h-[25px] pt-[6px] text-[12px] leading-4 text-[#777] tracking-[-0.2px]">
          <u className="underline-offset-2">D</u>escription:
        </div>
        <div className="ml-[10px] w-[293px] h-[218px] border border-[#a5a5a5] border-r-[#ddd] border-b-[#ddd]" />
        <div className="h-[22px] mt-[11px] pl-[11px] flex items-center text-[12px] text-[#777] tracking-[-0.2px]">
          <div className="w-[13px] h-[13px] bg-white border border-[#b4b4b4]" />
          <span className="ml-[6px] w-[79px]">
            <u className="underline-offset-2">H</u>ide
          </span>
          <div className="w-[13px] h-[13px] bg-white border border-[#b4b4b4]" />
          <span className="ml-[6px] w-[78px]">
            L<u className="underline-offset-2">o</u>ck
          </span>
          <div className="w-[97px] h-[23px] border border-[#aaa] bg-[#f3f3f3] text-center leading-[20px]">
            <u className="underline-offset-2">S</u>et
          </div>
        </div>
        <div className="pl-[9px] h-[30px] flex items-center text-[12px] text-[#777] tracking-[-0.1px]">
          <svg width="9" height="9" viewBox="0 0 9 9" stroke="#555">
            <rect x=".5" y=".5" width="8" height="8" fill="#f4f4f4" stroke="#888" />
            <path d="M2 4.500h5M4.500 2v5" />
          </svg>
          <span className="ml-[5px]">
            <u className="underline-offset-2">I</u>nteractivity
          </span>
        </div>
      </div>
      <div className="mt-[4px] ml-[4px] w-[309px] flex flex-col gap-[4px]">
        {docks.map((d) => (
          <div
            key={d.label}
            className={clsx(
              "h-[19px] border flex items-center pl-px pr-[6px] text-[12px] tracking-[-0.2px]",
              d.active ? "bg-[#bfe5fb] border-[#2f5f86]" : "bg-[#dadada] border-[#6a6a6a]"
            )}
          >
            <Svg size={14}>{d.icon}</Svg>
            <span className="ml-[2px] leading-4">{d.label}</span>
            <svg width="8" height="4" className="ml-auto mb-[2px]">
              <path d="M0 4l4-4 4 4z" fill={d.active ? "#000" : "#555"} />
            </svg>
          </div>
        ))}
      </div>
      <div className="mt-[8px] flex-1 border-l-2 border-black flex flex-col pt-px">
        <PanelTitle icon={fillStroke}>Fill and Stroke (Shift+Ctrl+F)</PanelTitle>
        <div className="mt-[5px] ml-[4px] flex items-end text-[12px] tracking-[-0.35px]">
          <div className="w-[41px] h-[26px] -mb-px bg-white border border-b-0 border-[#888] flex items-center pl-[4px] gap-[6px]">
            <div className="w-[8px] h-[8px] bg-linear-to-br from-[#9db4d6] to-[#e2ebf5]" />
            <span>
              <u className="underline-offset-2">F</u>ill
            </span>
          </div>
          <div className="w-[84px] h-[23px] border border-b-0 border-l-0 border-[#888] flex items-center whitespace-nowrap">
            <svg width="11" height="11" viewBox="0 0 11 11" fill="none" stroke="#666" className="mr-[3px] ml-[1px] shrink-0">
              <path d="M1.500 10V1.500H10" strokeDasharray="2 1" />
            </svg>
            Stroke paint
          </div>
          <div className="w-[83px] h-[23px] border border-b-0 border-[#888] flex items-center whitespace-nowrap border-l-[#555]">
            <svg width="11" height="11" viewBox="0 0 11 11" fill="none" stroke="#444" className="mr-[3px] ml-[2px] shrink-0">
              <path d="M0 2.500h7M0 5.500h10M0 8.500h9M7 1v3" />
            </svg>
            Stroke style
          </div>
        </div>
        <div className="ml-[4px] w-[303px] flex-1 mb-[2px] bg-white border-t border-l border-[#999]">
          <PaintModes />
          <div className="pl-[7px] pt-[13px] text-[12px] leading-4 font-bold tracking-[-0.35px]">No objects</div>
        </div>
      </div>
    </div>
  );
}

function PanelScroll() {
  return (
    <div className="ml-[2px] w-[17px] mt-[2px] mb-[2px] flex flex-col items-center bg-white border-x border-[#bbb]">
      <ScrollBtn>
        <ChevronUp size={12} />
      </ScrollBtn>
      <div className="w-[17px] h-[742px] bg-[#dcdcdc] border border-[#aaa] flex items-center justify-center">
        <Grip />
      </div>
      <div className="mt-auto">
        <ScrollBtn>
          <ChevronDown size={12} />
        </ScrollBtn>
      </div>
    </div>
  );
}

const palette = (
  "000000 1a1a1a 333333 4d4d4d 666666 808080 999999 b3b3b3 cccccc e6e6e6 ececec f2f2f2 f9f9f9 ffffff " +
  "800000 ff0000 808000 ffff00 008000 00ff00 008080 00ffff 000080 0000ff 800080 ff00ff " +
  "2b0000 550000 800000 aa0000 d40000 ff0000 ff2a2a ff5555 ff8080 ffaaaa ffd5d5 " +
  "280b0b 501616 782121 a02c2c c83737 d35f5f de8787 e9afaf f4d7d7 " +
  "241c1c 483737 6c5353 916f6f ac9393 c8b7b7 e3dbdb " +
  "2b1100 552200 803300 aa4400 d45500 ff6600 ff7f2a ff9955 ffb380 ffccaa ffe6d5 " +
  "28170b 502d16 784421 a05a2c c87137 d38d5f deaa87 e9c6af f4e3d7 " +
  "241f1c 483e37 6c5d53 917c6f ac9d93 c8beb7 e3dedb " +
  "2b2200 554400 806600 aa8800 d4aa00 ffcc00 ffd42a ffdd55 ffe680 ffeeaa fff6d5 " +
  "28220b 504416 786721 a0892c c8ab37 d3bc5f decd87 e9ddaf f4eed7 " +
  "24221c 484537 6c6753 918a6f aca793 c8c4b7 e3e2db " +
  "222b00 445500 668000 88aa00 aad400 ccff00 d4ff2a ddff55 e5ff80 eeffaa f6ffd5 " +
  "22280b 445016 677821 89a02c abc837 bcd35f cdde87 dde9af eef4d7 " +
  "22241c 454837 676c53 8a916f a7ac93 c4c8b7 e2e3db"
).split(" ");

function Palette() {
  return (
    <>
      <div className="h-[18px] shrink-0 flex">
        <div className="w-[1909px] h-[15px] border-t border-black flex">
          <div className="w-4 shrink-0 bg-white border border-black">
            <svg width="14" height="13" viewBox="0 0 14 13" stroke="#7a1a1a" strokeWidth="1.300">
              <path d="M0 0l14 13M14 0L0 13" />
            </svg>
          </div>
          {palette.map((c, i) => (
            <div key={i} className="flex-[14_1_0]" style={{ backgroundColor: "#" + c }} />
          ))}
          <div className="w-[17px] shrink-0 bg-[#112b00]" />
        </div>
        <svg width="6" height="8" viewBox="0 0 6 8" className="ml-[4px]">
          <path d="M6 0v8L1 4z" fill="#000" />
        </svg>
      </div>
      <div className="h-[15px] w-[1910px] shrink-0 bg-white border-y border-[#b4b4b4] flex items-center">
        <ScrollBtn>
          <ChevronLeft size={12} />
        </ScrollBtn>
        <div className="w-[591px] h-[15px] bg-[#dadada] border border-[#aaa] flex items-center justify-center">
          <Grip tall />
        </div>
        <div className="ml-auto">
          <ScrollBtn>
            <ChevronRight size={12} />
          </ScrollBtn>
        </div>
      </div>
    </>
  );
}

function StatusBar() {
  return (
    <div className="h-[29px] shrink-0 flex items-center text-[12px] leading-[14px] tracking-[-0.4px]">
      <div className="w-[70px] pl-[2px]">
        <div>Fill:</div>
        <div>Stroke:</div>
      </div>
      <div className="w-[56px] pl-[2px]">
        <div>N/A</div>
        <div>N/A</div>
      </div>
      <span className="w-[14px]">O:</span>
      <div className="w-[48px] h-5 border border-[#b4b4b4] flex text-[#888]">
        <span className="flex-1 pl-[3px] leading-[18px]">0</span>
        <Spin />
      </div>
      <div className="ml-[2px] w-px h-7 bg-[#999]" />
      <svg width="12" height="10" viewBox="0 0 12 10" fill="none" stroke="#333" className="ml-[6px]">
        <path d="M1 5c2-3 8-3 10 0M2 2l2 2M6 0v3M10 2L8 4" />
        <circle cx="6" cy="6" r="2.500" fill="#333" />
      </svg>
      <svg width="9" height="11" viewBox="0 0 9 11" fill="none" stroke="#665d2e" className="ml-[8px]">
        <path d="M6.500 5V2h-3v1" />
        <rect x="1.500" y="5" width="6" height="5" fill="#e4dfa8" />
      </svg>
      <div className="ml-[5px] w-[68px] h-[26px] bg-white border border-[#aaa] flex">
        <span className="flex-1 pl-[3px] leading-[23px] text-[11px] font-bold whitespace-nowrap tracking-[-0.4px]">•Layer 1</span>
        <div className="w-[17px] shrink-0 border border-[#555] flex items-center justify-center">
          <ChevronDown size={12} strokeWidth={3} />
        </div>
      </div>
      <span className="ml-[2px] tracking-[-0.26px]">
        <b>Alt:</b> click to select under; scroll mouse-wheel to cycle-select; drag to move selected or select by touch
      </span>
      <div className="ml-auto h-[29px] w-[73px] border-l border-[#aaa] pl-[3px] flex items-center">
        <div className="w-[18px]">
          <div>X:</div>
          <div>Y:</div>
        </div>
        <div className="font-['Liberation_Mono',monospace] text-[12px] tracking-[-0.2px]">
          <div>327.94</div>
          <div>333.55</div>
        </div>
      </div>
      <span className="w-[11px]">Z:</span>
      <div className="w-[57px] h-[21px] border border-r-0 border-[#999] bg-white flex">
        <span className="flex-1 pl-[9px] leading-[19px]">99%</span>
        <Spin dark />
      </div>
    </div>
  );
}

function TaskButton({ children, active, open }: { children: ReactNode; active?: boolean; open?: boolean }) {
  return (
    <div className={clsx("w-12 h-10 mr-[1.3px] flex flex-col items-center", active && "bg-[#955a23]")}>
      <div className="h-[38px] flex items-center justify-center">{children}</div>
      {(open || active) && <div className={clsx("h-[2px] bg-[#ffd7ac]", active ? "w-12" : "w-10")} />}
    </div>
  );
}

function Taskbar() {
  return (
    <div className="h-10 shrink-0 bg-[#5a3f27] flex items-center text-white">
      <div className="w-12 h-10 bg-[#3d1f05] flex items-center justify-center">
        <svg width="16" height="16" viewBox="0 0 16 16" fill="#fff">
          <path d="M0 2.300L6.500 1.400v6.200H0zM7.300 1.300L16 0v7.600H7.300zM0 8.400h6.500v6.200L0 13.700zM7.300 8.400H16V16l-8.700-1.300z" />
        </svg>
      </div>
      <div className="w-[344px] h-10 bg-[#6f4e34] flex items-center pl-[9px]">
        <div className="w-[21px] h-[21px] rounded-full border-[3px] border-[#fff4e8]" />
        <span className="ml-[10px] text-[15px] tracking-[-0.35px] text-[#c9b8aa]">Type here to search</span>
        <Mic size={17} className="ml-auto mr-[12px] text-[#d9cdc2]" strokeWidth={1.5} />
      </div>
      <TaskButton>
        <svg width="20" height="16" viewBox="0 0 20 16" fill="none" stroke="#fff" strokeWidth="1.200">
          <path d="M5 1h10v14H5zM3 3H1v10h2M17 3h2v10h-2" />
        </svg>
      </TaskButton>
      <div className="w-px" />
      <TaskButton>
        <svg width="21" height="22" viewBox="0 0 21 22" fill="#0a78d4">
          <path d="M1 10C2 4 6 1 11 1c6 0 9 4 9 9v3H7c0 4 7 6 12 3v4c-7 4-16 1-16-7 0-3 2-6 4-7-3 0-5 2-6 4zm6-1h7c0-4-6-5-7 0z" />
        </svg>
      </TaskButton>
      <TaskButton open>
        <svg width="22" height="20" viewBox="0 0 22 20">
          <path d="M0 1h8l2 3h11v15H0z" fill="#f5c85a" />
          <path d="M1 5h20v11H1z" fill="#ffe9a6" />
          <path d="M3 19v-8h16v8h-4v-4H7v4z" fill="#3ba2e0" />
        </svg>
      </TaskButton>
      <TaskButton>
        <svg width="22" height="24" viewBox="0 0 22 24">
          <path d="M7 7V4c0-4 8-4 8 0v3" fill="none" stroke="#fff" strokeWidth="1.500" />
          <path d="M0 6h22v15c0 1-1 2-2 2H2c-1 0-2-1-2-2z" fill="#fff" />
          <path d="M6 9h5v5H6z" fill="#f25022" />
          <path d="M12 9h5v5h-5z" fill="#7fba00" />
          <path d="M6 15h5v5H6z" fill="#00a4ef" />
          <path d="M12 15h5v5h-5z" fill="#ffb900" />
        </svg>
      </TaskButton>
      <TaskButton>
        <svg width="23" height="24" viewBox="0 0 23 24">
          <path d="M3 1h14l6 5v14c0 2-1 3-3 3H3c-2 0-3-1-3-3V4c0-2 1-3 3-3z" fill="#e6212e" />
          <path d="M17 1l6 5h-6z" fill="#f58a90" />
          <path d="M3 7c5-1 10-1 14 1L7 17c4-3 9-3 13-2" fill="none" stroke="#fff" strokeWidth="2.600" strokeLinejoin="round" />
        </svg>
      </TaskButton>
      <TaskButton>
        <div className="relative w-[25px] h-[23px]">
          <svg width="25" height="21" viewBox="0 0 25 21" fill="#fff">
            <path d="M0 7l12-7 12 7-12 2z" />
            <path d="M0 9l12 4 12-4v12H0z" />
            <path d="M2 8l8 6 12-6z" fill="#5a3f27" />
            <path d="M2 7l10-6 10 6-10 5z" />
          </svg>
          <span className="absolute left-[14px] top-[6px] w-[21px] h-[21px] rounded-full bg-[#8b6038] border border-[#d9b48c] text-[13px] leading-[19px] text-center tracking-[-0.5px]">
            55
          </span>
        </div>
      </TaskButton>
      <TaskButton active>
        <InkscapeLogo size={24} />
      </TaskButton>
      <TaskButton open>
        <svg width="26" height="26" viewBox="0 0 26 26">
          <circle cx="12" cy="12" r="11.500" fill="#e04a3a" />
          <path d="M2 6l6 10 3 7C2 22-2 13 2 6z" fill="#3aa757" />
          <path d="M12 12h11c0 6-4 11-11 11z" fill="#fbc02d" />
          <circle cx="11" cy="11" r="4.500" fill="#4285f4" stroke="#fff" strokeWidth="1.500" />
          <path d="M12 13h13v13H12z" fill="#d7cfe0" />
          <path d="M15 26c0-9 7-9 7 0z" fill="#41304f" />
          <circle cx="18.500" cy="17" r="2.500" fill="#c99a82" />
        </svg>
      </TaskButton>
      <TaskButton>
        <svg width="24" height="24" viewBox="0 0 24 24">
          <path d="M5 0h19v19l-5 5H0V5z" fill="#13a5e8" />
          <path d="M16 8c-5-3-9 0-9 4s4 7 9 4" fill="none" stroke="#fff" strokeWidth="3.500" />
        </svg>
      </TaskButton>
      <TaskButton open>
        <div className="w-[23px] h-[24px] bg-[#c8131f] rounded-t-md text-center flex flex-col justify-between overflow-hidden">
          <div className="text-[11px] leading-[14px] font-bold">SW</div>
          <div className="text-[8px] leading-[10px] font-bold bg-[#33261c]">2016</div>
        </div>
      </TaskButton>
      <div className="ml-auto flex items-center">
        <div className="relative w-[22px] h-[22px] rounded-full bg-[#1b9ad6] border-2 border-white text-[15px] font-bold leading-[18px] text-center">
          ?
          <span className="absolute left-[12px] top-[10px] w-[9px] h-[9px] rounded-full bg-[#1a7fc4] text-[8px] leading-[9px]">i</span>
        </div>
        <svg width="15" height="17" viewBox="0 0 15 17" fill="none" stroke="#fff" strokeWidth="1.200" className="ml-[25px]">
          <circle cx="4.500" cy="9" r="2.500" />
          <circle cx="10.500" cy="4" r="2.500" />
          <path d="M1 16c0-6 7-6 7 0M8 9c2-4 6-2 6 2" />
        </svg>
        <ChevronUp size={18} className="ml-[24px]" strokeWidth={1.6} />
        <svg width="17" height="12" viewBox="0 0 17 12" fill="none" stroke="#fff" className="ml-[15px]">
          <path d="M6 3h9v7H4V7M15.500 5v3M1 3v2c0 2 4 2 4 0V3zM2 1v2M4 1v2" />
          <path d="M8 5h2v3H8z" fill="#fff" />
        </svg>
        <svg width="14" height="14" viewBox="0 0 14 14" fill="none" stroke="#cbbdb0" strokeWidth="1.200" className="ml-[18px]">
          <path d="M1 12C1 6 6 1 13 1M4 13c0-5 4-8 9-8M8 13c0-3 2-5 5-5" />
          <circle cx="12" cy="12" r="1.500" fill="#fff" stroke="none" />
        </svg>
        <div className="ml-[17px] w-[174px] h-10 bg-linear-to-r from-[#3d1f05] to-[#3f1f02] flex items-center text-[12px] text-center tracking-[-0.4px]">
          <svg width="18" height="14" viewBox="0 0 18 14" fill="none" stroke="#fff" strokeWidth="1.100" className="-ml-[4px]">
            <path d="M1 5h3l4-4v12L4 9H1zM10 5c1 1 1 3 0 4" />
            <path d="M12 3c2 2 2 6 0 8M14 1c3 3 3 9 0 12" stroke="#a08c7a" />
          </svg>
          <div className="ml-[12px] w-[26px] leading-[17px]">
            <div>ENG</div>
            <div>US</div>
          </div>
          <div className="ml-[12px] w-[50px] leading-[17px] whitespace-nowrap">
            <div>3:53 PM</div>
            <div>6/4/2018</div>
          </div>
          <div className="relative ml-[20px] w-4 h-4">
            <svg width="16" height="15" viewBox="0 0 16 15">
              <path d="M0 0h16v12H8l-3 3v-3H0z" fill="#fff" />
              <path d="M3 4h10M3 6.500h10M3 9h6" stroke="#3f1f02" />
            </svg>
            <span className="absolute left-[7px] top-[4px] w-[18px] h-[18px] rounded-full bg-[#7b5230] border border-[#c9976a] leading-4">10</span>
          </div>
          <div className="ml-auto mr-[3px] w-px h-10 bg-[#8a7258]" />
        </div>
      </div>
    </div>
  );
}

export default function App() {
  return (
    <div className={clsx("w-[1920px] h-[1080px] overflow-hidden flex flex-col bg-[#efefef] text-black", UI)}>
      <Header />
      <Toolbars />
      <div className="h-[843px] shrink-0 flex">
        <Toolbox />
        <Workspace />
        <Panel />
        <PanelScroll />
      </div>
      <Palette />
      <StatusBar />
      <Taskbar />
    </div>
  );
}
